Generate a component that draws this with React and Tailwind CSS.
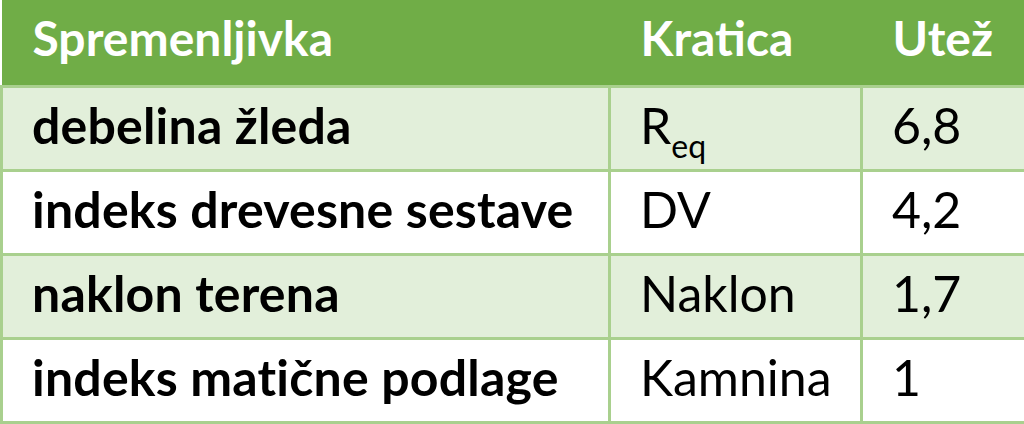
import React from 'react';

const rows = [
  { name: 'debelina žleda', abbr: <>R<sub className="text-[32px] align-[-6px]">eq</sub></>, weight: '6,8', shaded: true },
  { name: 'indeks drevesne sestave', abbr: 'DV', weight: '4,2', shaded: false },
  { name: 'naklon terena', abbr: 'Naklon', weight: '1,7', shaded: true },
  { name: 'indeks matične podlage', abbr: 'Kamnina', weight: '1', shaded: false },
];

export default function App() {
  return (
    <div className="w-[1024px] h-[424px] bg-white overflow-hidden font-['Lato','Liberation_Sans',sans-serif]">
      <table className="w-[1024px] border-collapse table-fixed">
        <colgroup>
          <col className="w-[608px]" />
          <col className="w-[252px]" />
          <col className="w-[164px]" />
        </colgroup>
        <thead>
          <tr className="h-[86px] bg-[#70AD47] text-white text-[48px] font-bold leading-none">
            <th className="text-left pl-[31px] pb-[8px] border-0">Spremenljivka</th>
            <th className="text-left pl-[31px] pb-[8px] border-0">Kratica</th>
            <th className="text-left pl-[31px] pb-[8px] border-0">Utež</th>
          </tr>
        </thead>
        <tbody>
          {rows.map((r) => (
            <tr
              key={r.name}
              className={`h-[84px] text-black text-[50px] leading-none ${r.shaded ? 'bg-[#E2EFDA]' : 'bg-white'}`}
            >
              <td className="border-[3px] border-[#A9D08E] pl-[29px] pb-[6px] font-bold tracking-[0.2px]">{r.name}</td>
              <td className="border-[3px] border-[#A9D08E] pl-[29px] pb-[6px]">{r.abbr}</td>
              <td className="border-[3px] border-[#A9D08E] pl-[29px] pb-[6px]">{r.weight}</td>
            </tr>
          ))}
        </tbody>
      </table>
    </div>
  );
}
